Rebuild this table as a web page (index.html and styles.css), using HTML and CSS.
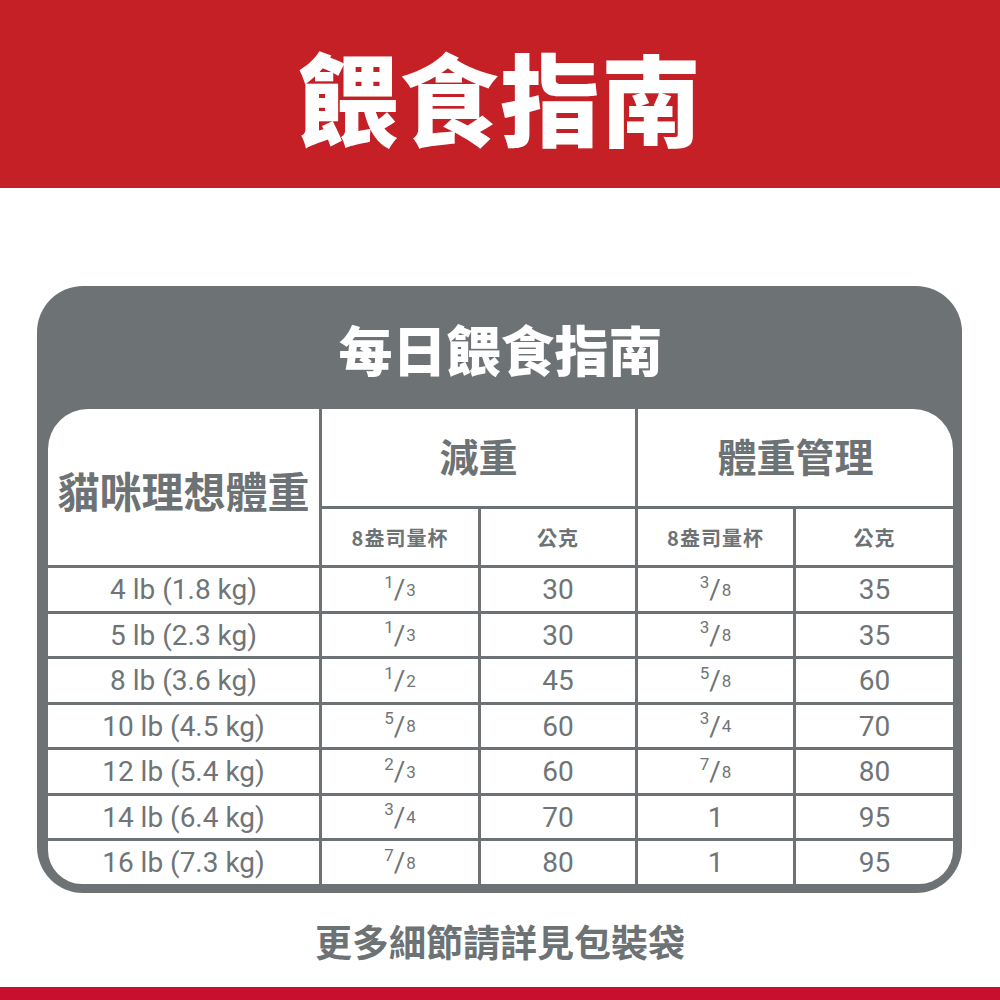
FILE: index.html
```html
<!DOCTYPE html>
<html lang="zh-Hant">
<head>
<meta charset="utf-8">
<title>餵食指南</title>
<link rel="stylesheet" href="styles.css">
</head>
<body>
<div class="page">
  <header class="banner"><h1 class="banner-title">餵食指南</h1></header>
  <main class="main">
    <section class="card">
      <h2 class="card-title">每日餵食指南</h2>
      <div class="grid">
        <div class="cell head-weight">貓咪理想體重</div>
        <div class="cell head-group head-loss">減重</div>
        <div class="cell head-group head-manage">體重管理</div>
        <div class="cell sub">8盎司量杯</div>
        <div class="cell sub">公克</div>
        <div class="cell sub">8盎司量杯</div>
        <div class="cell sub">公克</div>

        <div class="cell data">4 lb (1.8 kg)</div>
        <div class="cell data"><span class="num">1</span>/<span class="den">3</span></div>
        <div class="cell data">30</div>
        <div class="cell data"><span class="num">3</span>/<span class="den">8</span></div>
        <div class="cell data">35</div>

        <div class="cell data">5 lb (2.3 kg)</div>
        <div class="cell data"><span class="num">1</span>/<span class="den">3</span></div>
        <div class="cell data">30</div>
        <div class="cell data"><span class="num">3</span>/<span class="den">8</span></div>
        <div class="cell data">35</div>

        <div class="cell data">8 lb (3.6 kg)</div>
        <div class="cell data"><span class="num">1</span>/<span class="den">2</span></div>
        <div class="cell data">45</div>
        <div class="cell data"><span class="num">5</span>/<span class="den">8</span></div>
        <div class="cell data">60</div>

        <div class="cell data">10 lb (4.5 kg)</div>
        <div class="cell data"><span class="num">5</span>/<span class="den">8</span></div>
        <div class="cell data">60</div>
        <div class="cell data"><span class="num">3</span>/<span class="den">4</span></div>
        <div class="cell data">70</div>

        <div class="cell data">12 lb (5.4 kg)</div>
        <div class="cell data"><span class="num">2</span>/<span class="den">3</span></div>
        <div class="cell data">60</div>
        <div class="cell data"><span class="num">7</span>/<span class="den">8</span></div>
        <div class="cell data">80</div>

        <div class="cell data">14 lb (6.4 kg)</div>
        <div class="cell data"><span class="num">3</span>/<span class="den">4</span></div>
        <div class="cell data">70</div>
        <div class="cell data">1</div>
        <div class="cell data">95</div>

        <div class="cell data">16 lb (7.3 kg)</div>
        <div class="cell data"><span class="num">7</span>/<span class="den">8</span></div>
        <div class="cell data">80</div>
        <div class="cell data">1</div>
        <div class="cell data">95</div>
      </div>
    </section>
    <p class="note">更多細節請詳見包裝袋</p>
  </main>
  <footer class="bottom-bar"></footer>
</div>
</body>
</html>
```

FILE: styles.css
```css
html, body {
  margin: 0;
  padding: 0;
  background: #ffffff;
}

.page {
  width: 1000px;
  height: 1000px;
  display: flex;
  flex-direction: column;
  font-family: "Noto Sans CJK TC", "Noto Sans", sans-serif;
  overflow: hidden;
}

.banner {
  height: 188px;
  background: #c42026;
  display: flex;
  align-items: center;
  justify-content: center;
}

.banner-title {
  margin: 0;
  padding-top: 4px;
  color: #ffffff;
  font-size: 100px;
  font-weight: 900;
  line-height: 1;
  letter-spacing: 1px;
}

.main {
  flex: 1;
  display: flex;
  flex-direction: column;
  padding-top: 98px;
}

.card {
  margin: 0 38px 0 37px;
  background: #6d7275;
  border-radius: 46px;
  padding: 0 9px 9px 11px;
}

.card-title {
  margin: 0;
  height: 123px;
  display: flex;
  align-items: center;
  justify-content: center;
  color: #ffffff;
  font-size: 54px;
  font-weight: 900;
  line-height: 1;
  padding-top: 2px;
  box-sizing: border-box;
}

.grid {
  display: grid;
  grid-template-columns: 271px 156px 154px 155px 157px;
  grid-template-rows: 97px 56px repeat(7, 42.5px);
  gap: 3px;
  background: #6d7275;
  border-radius: 40px 40px 34px 34px;
  overflow: hidden;
}

.cell {
  background: #ffffff;
  display: flex;
  align-items: center;
  justify-content: center;
  color: #6d7275;
}

.head-weight {
  grid-row: span 2;
  font-size: 42px;
  font-weight: 700;
  padding-top: 4px;
}

.head-group {
  grid-column: span 2;
  font-size: 39px;
  font-weight: 700;
  padding-bottom: 6px;
}

.sub {
  font-size: 20px;
  font-weight: 700;
  letter-spacing: 1px;
}

.data {
  font-family: Roboto, "Liberation Sans", sans-serif;
  font-size: 28px;
  font-weight: 400;
  color: #6f7477;
  padding-top: 1px;
}

.num {
  font-size: 17px;
  position: relative;
  top: -8px;
}

.den {
  font-size: 17px;
  margin-left: 1px;
}

.note {
  margin: 0;
  flex: 1;
  display: flex;
  align-items: center;
  justify-content: center;
  color: #6d7275;
  font-size: 37px;
  font-weight: 700;
  padding-top: 2px;
}

.bottom-bar {
  height: 13px;
  background: #c8102e;
}
```
